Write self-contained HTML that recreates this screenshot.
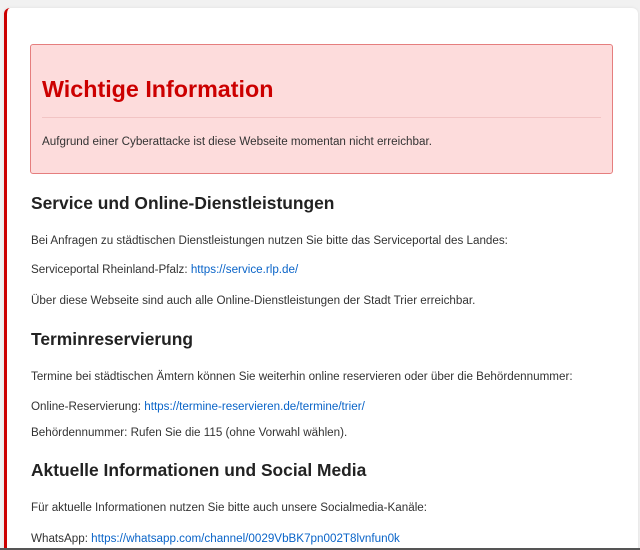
<!DOCTYPE html>
<html><head><meta charset="utf-8"><style>
html,body{margin:0;padding:0;width:640px;height:550px;overflow:hidden;background:#f1f1f1;font-family:"Liberation Sans",Arial,sans-serif;color:#333}
.card{position:absolute;left:4px;top:8px;width:631px;height:542px;background:#fff;border-left:3px solid #c00;border-radius:6px 6px 0 0;box-shadow:0 0 3px rgba(0,0,0,.08)}
.alert{position:absolute;left:30px;top:44px;width:581px;height:128px;background:#fddcdc;border:1px solid #e57e7e;border-radius:3px}
.hr{position:absolute;left:42px;top:117px;width:559px;height:1px;background:#f2c4c4}
.t{position:absolute;left:31px;white-space:nowrap;font-size:11.65px;line-height:14px}
.h{position:absolute;left:31px;white-space:nowrap;font-size:17.4px;font-weight:bold;line-height:22px;color:#222}
a{color:#0a64c8;text-decoration:none}
</style></head><body>
<div class="card"></div>
<div class="alert"></div>
<div class="hr"></div>
<div style="position:absolute;left:42px;top:75px;font-size:23.3px;line-height:28px;font-weight:bold;color:#cc0000;white-space:nowrap">Wichtige Information</div>
<div class="t" style="left:42px;top:135px">Aufgrund einer Cyberattacke ist diese Webseite momentan nicht erreichbar.</div>
<div class="h" style="top:192px">Service und Online-Dienstleistungen</div>
<div class="t" style="top:234px">Bei Anfragen zu städtischen Dienstleistungen nutzen Sie bitte das Serviceportal des Landes:</div>
<div class="t" style="top:263px">Serviceportal Rheinland-Pfalz: <a>https://service.rlp.de/</a></div>
<div class="t" style="top:294px">Über diese Webseite sind auch alle Online-Dienstleistungen der Stadt Trier erreichbar.</div>
<div class="h" style="top:328px">Terminreservierung</div>
<div class="t" style="top:370px">Termine bei städtischen Ämtern können Sie weiterhin online reservieren oder über die Behördennummer:</div>
<div class="t" style="top:400px">Online-Reservierung: <a>https://termine-reservieren.de/termine/trier/</a></div>
<div class="t" style="top:426px">Behördennummer: Rufen Sie die 115 (ohne Vorwahl wählen).</div>
<div class="h" style="top:459px">Aktuelle Informationen und Social Media</div>
<div class="t" style="top:501px">Für aktuelle Informationen nutzen Sie bitte auch unsere Socialmedia-Kanäle:</div>
<div class="t" style="top:532px">WhatsApp: <a>https://whatsapp.com/channel/0029VbBK7pn002T8lvnfun0k</a></div>
<div style="position:absolute;left:0;top:548px;width:640px;height:2px;background:#555"></div>
</body></html>
